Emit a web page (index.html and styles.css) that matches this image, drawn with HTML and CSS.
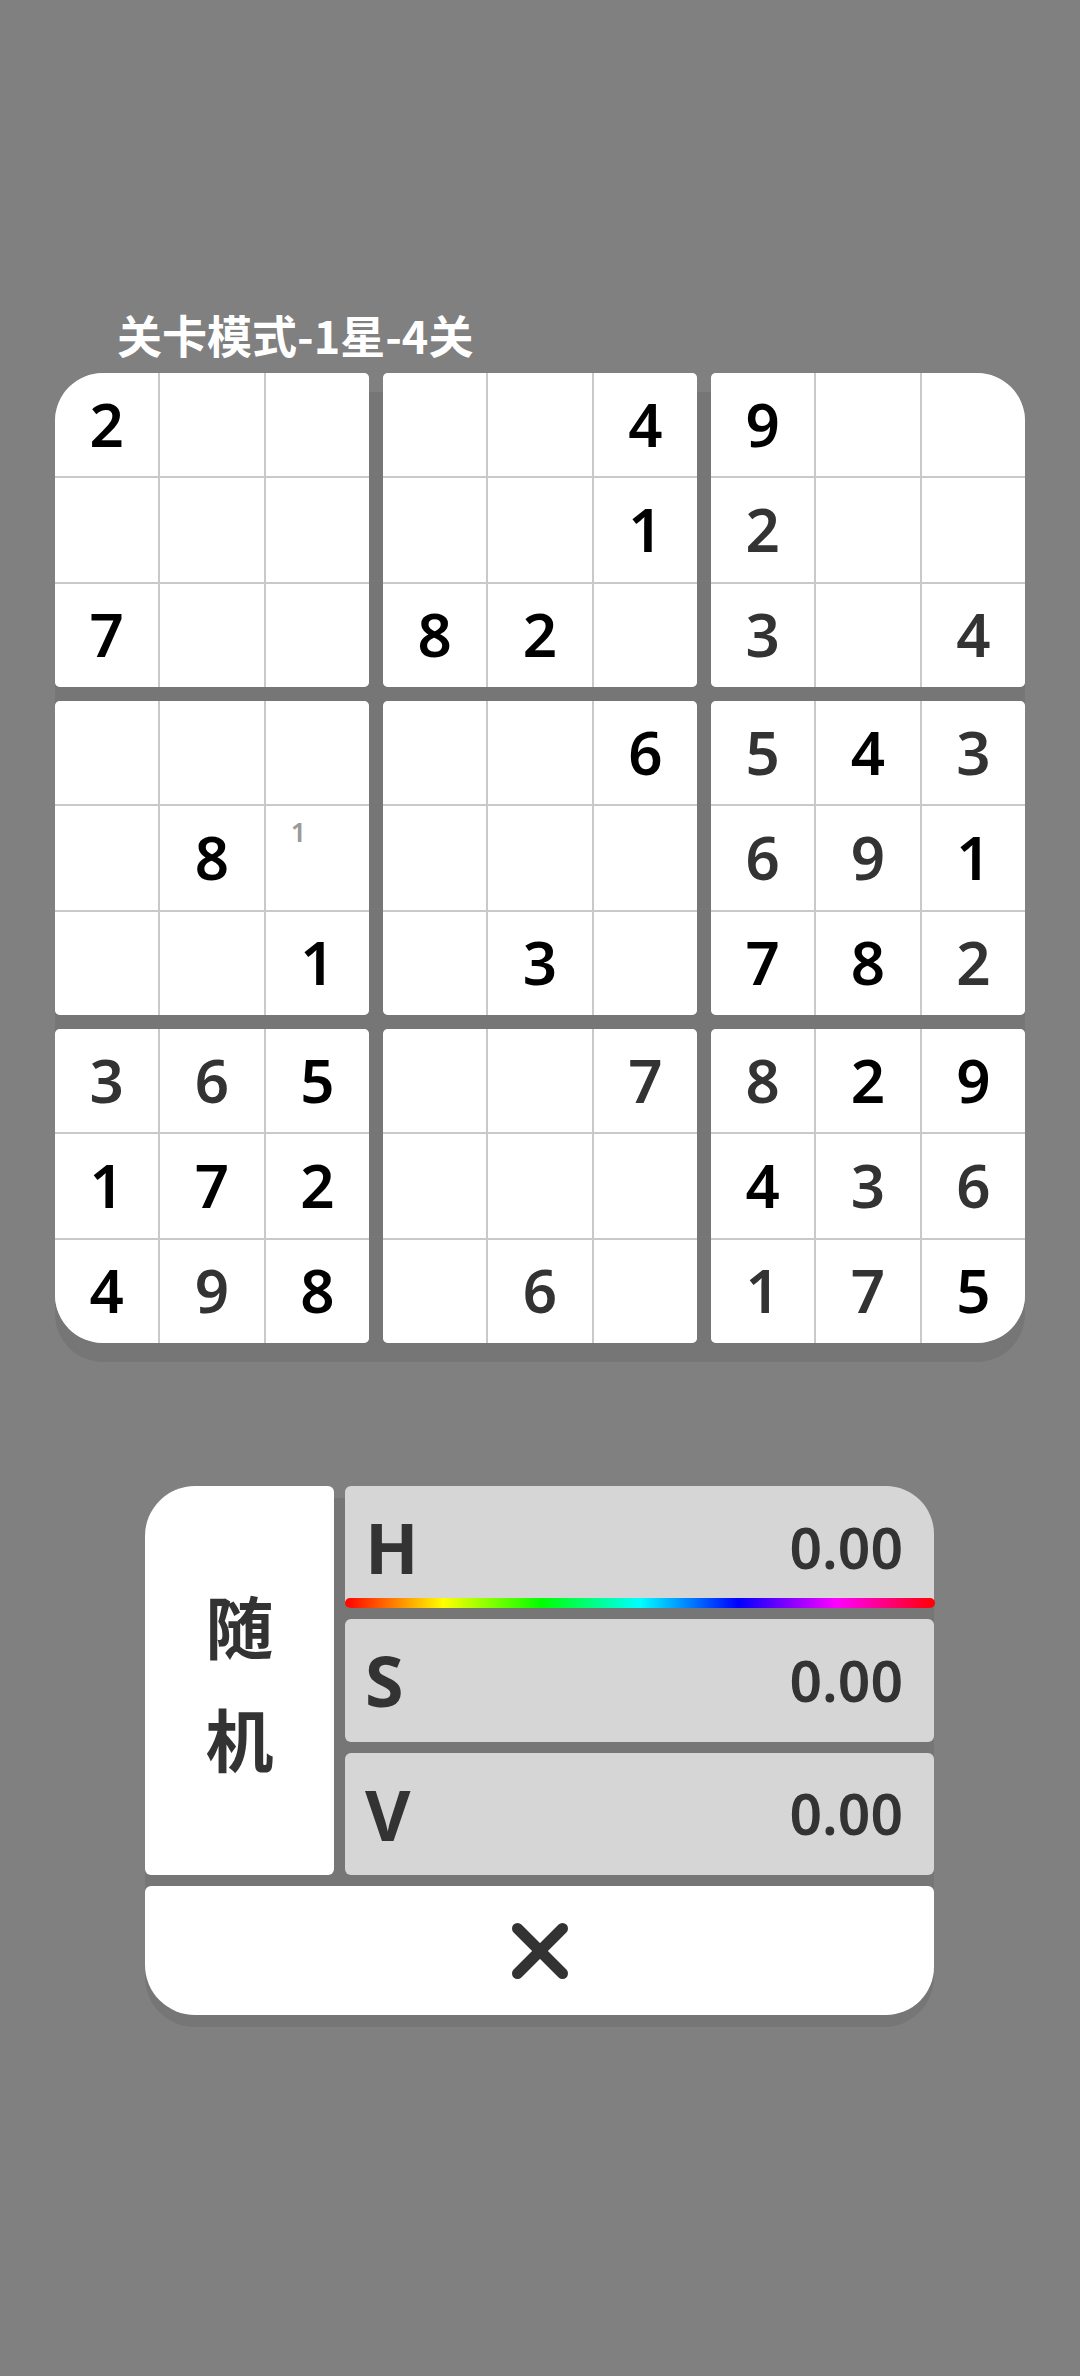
FILE: index.html
```html
<!DOCTYPE html>
<html lang="zh-CN">
<head>
<meta charset="utf-8">
<title>数独</title>
<link rel="stylesheet" href="styles.css">
</head>
<body>
<main class="page">
  <h1 class="title">关卡模式-1星-4关</h1>
  <section class="board">
    <div class="block tl">
      <div class="cell given">2</div><div class="cell"></div><div class="cell"></div>
      <div class="cell"></div><div class="cell"></div><div class="cell"></div>
      <div class="cell given">7</div><div class="cell"></div><div class="cell"></div>
    </div>
    <div class="block">
      <div class="cell"></div><div class="cell"></div><div class="cell given">4</div>
      <div class="cell"></div><div class="cell"></div><div class="cell given">1</div>
      <div class="cell given">8</div><div class="cell given">2</div><div class="cell"></div>
    </div>
    <div class="block tr">
      <div class="cell given">9</div><div class="cell"></div><div class="cell"></div>
      <div class="cell filled">2</div><div class="cell"></div><div class="cell"></div>
      <div class="cell filled">3</div><div class="cell"></div><div class="cell filled">4</div>
    </div>
    <div class="block">
      <div class="cell"></div><div class="cell"></div><div class="cell"></div>
      <div class="cell"></div><div class="cell given">8</div><div class="cell noted"><span class="note">1</span></div>
      <div class="cell"></div><div class="cell"></div><div class="cell given">1</div>
    </div>
    <div class="block">
      <div class="cell"></div><div class="cell"></div><div class="cell given">6</div>
      <div class="cell"></div><div class="cell"></div><div class="cell"></div>
      <div class="cell"></div><div class="cell given">3</div><div class="cell"></div>
    </div>
    <div class="block">
      <div class="cell filled">5</div><div class="cell given">4</div><div class="cell filled">3</div>
      <div class="cell filled">6</div><div class="cell filled">9</div><div class="cell given">1</div>
      <div class="cell given">7</div><div class="cell given">8</div><div class="cell filled">2</div>
    </div>
    <div class="block bl">
      <div class="cell filled">3</div><div class="cell filled">6</div><div class="cell given">5</div>
      <div class="cell given">1</div><div class="cell given">7</div><div class="cell given">2</div>
      <div class="cell given">4</div><div class="cell filled">9</div><div class="cell given">8</div>
    </div>
    <div class="block">
      <div class="cell"></div><div class="cell"></div><div class="cell filled">7</div>
      <div class="cell"></div><div class="cell"></div><div class="cell"></div>
      <div class="cell"></div><div class="cell filled">6</div><div class="cell"></div>
    </div>
    <div class="block br">
      <div class="cell filled">8</div><div class="cell given">2</div><div class="cell given">9</div>
      <div class="cell given">4</div><div class="cell filled">3</div><div class="cell filled">6</div>
      <div class="cell filled">1</div><div class="cell filled">7</div><div class="cell given">5</div>
    </div>
  </section>

  <section class="panel">
    <div class="random">随<br>机</div>
    <div class="hsv">
      <div class="row row-h">
        <span class="letter">H</span><span class="value">0.00</span>
        <div class="hue-bar"></div>
      </div>
      <div class="row">
        <span class="letter">S</span><span class="value">0.00</span>
      </div>
      <div class="row">
        <span class="letter">V</span><span class="value">0.00</span>
      </div>
    </div>
    <div class="close">
      <svg class="close-icon" width="56" height="56" viewBox="0 0 56 56" aria-hidden="true">
        <line x1="5.5" y1="5.5" x2="50.5" y2="50.5"/>
        <line x1="50.5" y1="5.5" x2="5.5" y2="50.5"/>
      </svg>
    </div>
  </section>
</main>
</body>
</html>
```

FILE: styles.css
```css
html, body {
  margin: 0;
  padding: 0;
  background: #808080;
}

body {
  width: 1080px;
  min-height: 2376px;
  font-family: "Noto Sans", "Noto Sans CJK SC", sans-serif;
}

.page {
  padding-top: 305px;
}

.title {
  margin: 0 0 8px 0;
  padding-left: 117px;
  height: 60px;
  line-height: 60px;
  font-family: "Noto Sans CJK SC", "Noto Sans", sans-serif;
  font-size: 45px;
  font-weight: 700;
  color: #ffffff;
}

/* ---------- board ---------- */
.board {
  position: relative;
  isolation: isolate;
  margin-left: 55px;
  width: 970px;
  display: grid;
  grid-template-columns: repeat(3, 314px);
  grid-template-rows: repeat(3, 314px);
  gap: 14px;
}

.board::before {
  content: "";
  position: absolute;
  left: 0;
  right: 0;
  top: 19px;
  bottom: -19px;
  background: #767676;
  border-radius: 48px;
  z-index: -1;
}

.block {
  display: grid;
  grid-template-columns: repeat(3, 1fr);
  grid-template-rows: repeat(3, 1fr);
  gap: 2px;
  background: #c9c9c9;
  border-radius: 5px;
  overflow: hidden;
}

.block.tl { border-top-left-radius: 48px; }
.block.tr { border-top-right-radius: 48px; }
.block.bl { border-bottom-left-radius: 48px; }
.block.br { border-bottom-right-radius: 48px; }

.cell {
  background: #ffffff;
  display: flex;
  align-items: center;
  justify-content: center;
  font-family: "Noto Sans", sans-serif;
  font-size: 60px;
  font-weight: 600;
  line-height: 1;
  padding-bottom: 2px;
  box-sizing: border-box;
}

.cell.given { color: #000000; }
.cell.filled { color: #333333; font-weight: 600; }

.cell.noted {
  position: relative;
}

.note {
  position: absolute;
  left: 25px;
  top: 12px;
  font-size: 27px;
  font-weight: 600;
  color: #9a9a9a;
}

/* ---------- panel ---------- */
.panel {
  position: relative;
  isolation: isolate;
  margin: 143px 0 0 145px;
  width: 789px;
  display: grid;
  grid-template-columns: 189px 1fr;
  grid-template-rows: 389px 129px;
  column-gap: 11px;
  row-gap: 11px;
}

.panel::before {
  content: "";
  position: absolute;
  left: 0;
  right: 0;
  top: 12px;
  bottom: -12px;
  background: #767676;
  border-radius: 50px;
  z-index: -1;
}

.random {
  background: #ffffff;
  border-radius: 50px 6px 6px 6px;
  display: flex;
  align-items: center;
  justify-content: center;
  text-align: center;
  font-family: "Noto Sans CJK SC", sans-serif;
  font-size: 68px;
  font-weight: 700;
  line-height: 113px;
  color: #333333;
}

.hsv {
  display: flex;
  flex-direction: column;
  gap: 11px;
}

.row {
  position: relative;
  flex: 1;
  background: #d6d6d6;
  border-radius: 6px;
  display: flex;
  align-items: center;
  justify-content: space-between;
  padding: 0 31px 0 20px;
  overflow: hidden;
}

.row-h {
  border-top-right-radius: 48px;
  overflow: visible;
}

.letter {
  font-family: "Noto Sans", sans-serif;
  font-size: 70px;
  font-weight: 700;
  color: #333333;
  line-height: 1;
}

.value {
  font-family: "Noto Sans", sans-serif;
  font-size: 57px;
  font-weight: 600;
  color: #333333;
  line-height: 1;
}

.hue-bar {
  position: absolute;
  left: 0;
  right: -1px;
  bottom: 0;
  height: 10px;
  border-radius: 5px;
  background: linear-gradient(to right, #ff0000, #ffff00, #00ff00, #00ffff, #0000ff, #ff00ff, #ff0000);
}

.close {
  grid-column: 1 / span 2;
  background: #ffffff;
  border-radius: 6px 6px 48px 50px;
  display: flex;
  align-items: center;
  justify-content: center;
}

.close-icon line {
  stroke: #333333;
  stroke-width: 11;
  stroke-linecap: round;
}
```
